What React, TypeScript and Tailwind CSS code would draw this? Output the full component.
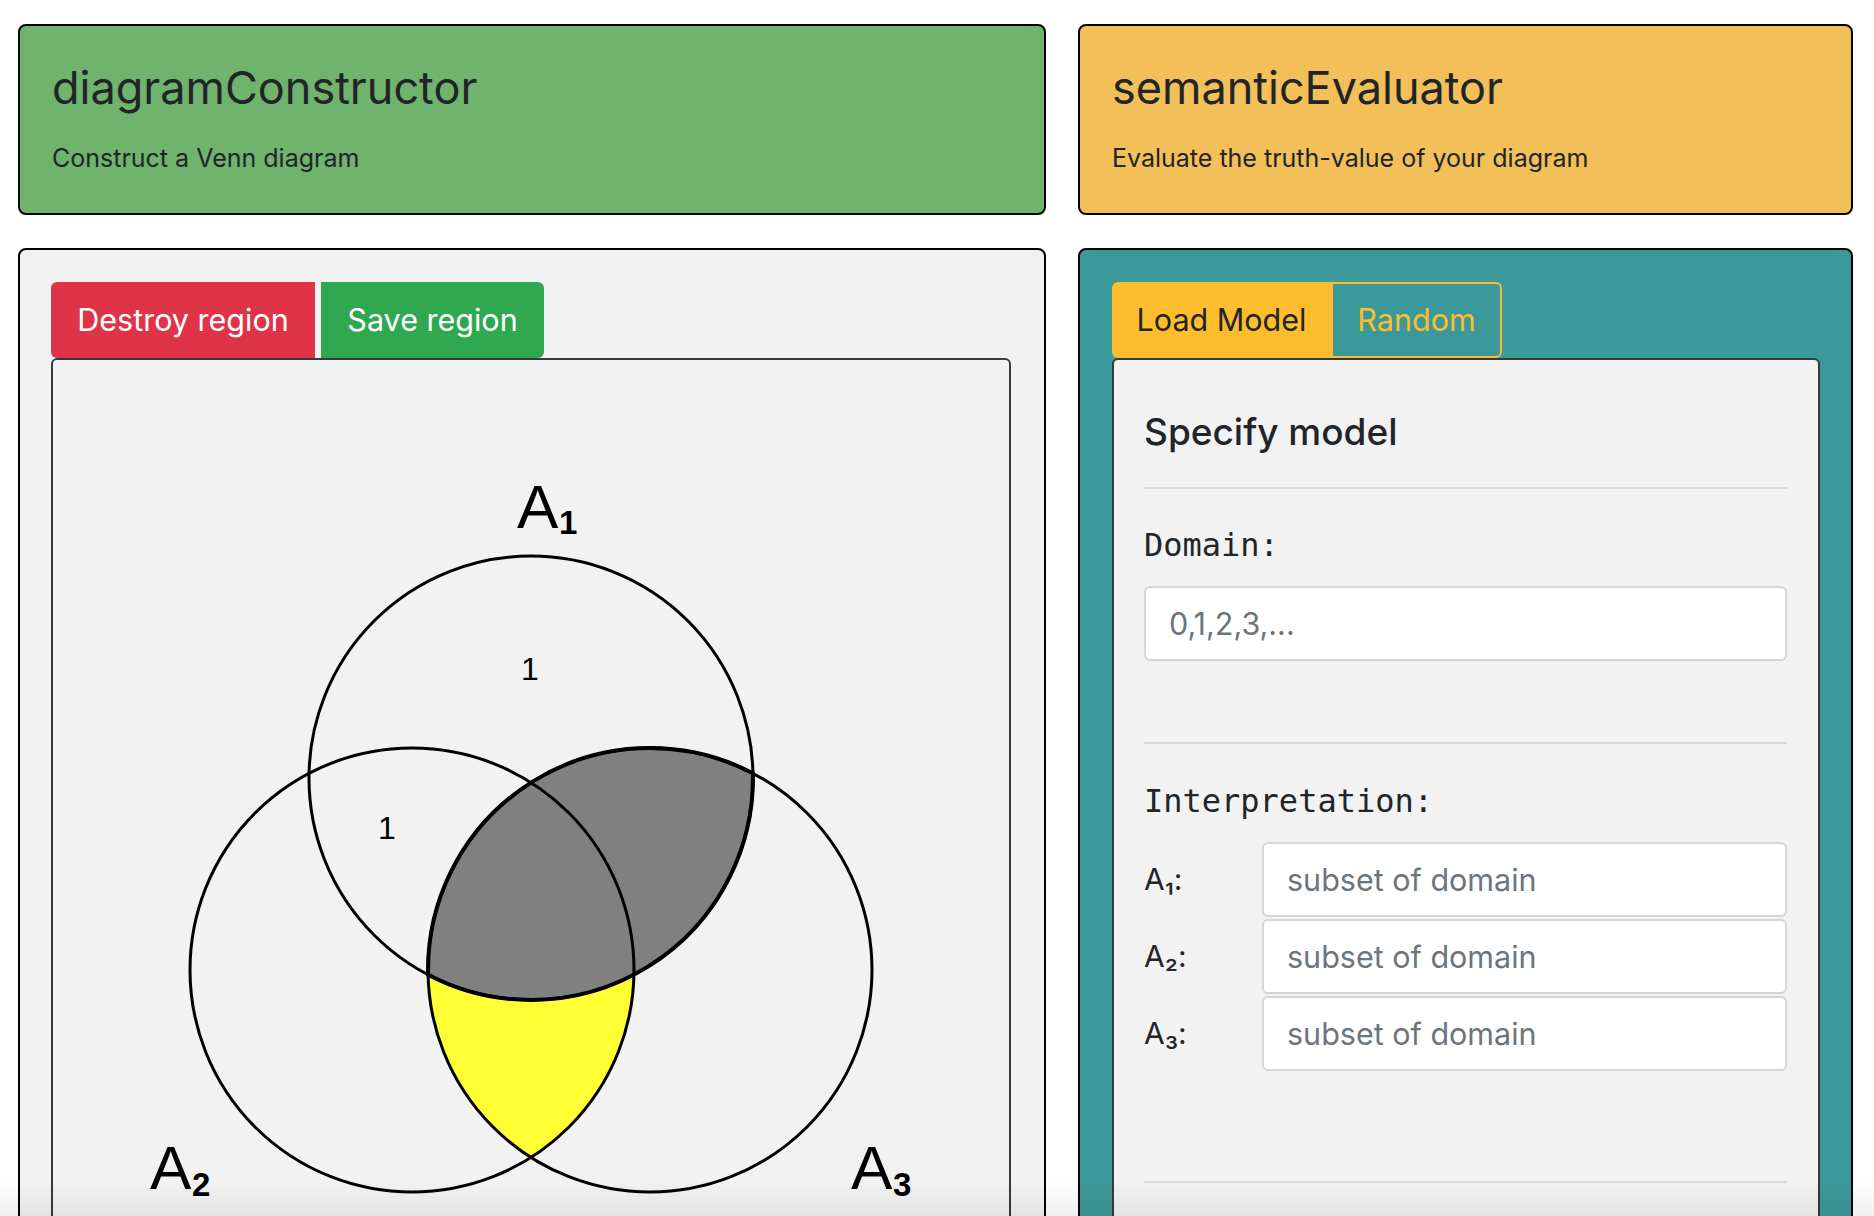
import React from 'react';

const A1 = { cx: 478, cy: 418 };
const A2 = { cx: 359, cy: 610 };
const A3 = { cx: 597, cy: 610 };
const R = 222;

function VennDiagram() {
  // lens A1 ∩ A3, used for the thick outline of the shaded region
  const lens = 'M 375.1 614.7 A 222 222 0 0 0 699.9 413.3 A 222 222 0 0 0 375.1 614.7 Z';

  return (
    <svg width={956} height={860} viewBox="0 0 956 860" className="block">
      <defs>
        <clipPath id="clipA3">
          <circle cx={A3.cx} cy={A3.cy} r={R} />
        </clipPath>
      </defs>

      {/* A2 ∩ A3 (yellow), then A1 ∩ A3 on top (grey) */}
      <circle cx={A2.cx} cy={A2.cy} r={R} fill="#ffff33" clipPath="url(#clipA3)" />
      <circle cx={A1.cx} cy={A1.cy} r={R} fill="#808080" clipPath="url(#clipA3)" />
      <path d={lens} fill="none" stroke="#000" strokeWidth={4} />

      <circle cx={A1.cx} cy={A1.cy} r={R} fill="none" stroke="#000" strokeWidth={3} />
      <circle cx={A2.cx} cy={A2.cy} r={R} fill="none" stroke="#000" strokeWidth={3} />
      <circle cx={A3.cx} cy={A3.cy} r={R} fill="none" stroke="#000" strokeWidth={3} />

      <g fontFamily="'Liberation Sans', Arial, sans-serif" fill="#000">
        <text x={464} y={168} fontSize={62}>A</text>
        <text x={506} y={174} fontSize={33} fontWeight={700}>1</text>

        <text x={97} y={829} fontSize={62}>A</text>
        <text x={139} y={836} fontSize={33} fontWeight={700}>2</text>

        <text x={798} y={829} fontSize={62}>A</text>
        <text x={840} y={836} fontSize={33} fontWeight={700}>3</text>

        <text x={477} y={320} fontSize={32} textAnchor="middle">1</text>
        <text x={334} y={479} fontSize={32} textAnchor="middle">1</text>
      </g>
    </svg>
  );
}

function HeaderCard({ title, subtitle, bg }: { title: string; subtitle: string; bg: string }) {
  return (
    <div className={`h-[191px] rounded-[8px] border-2 border-black px-[32px] pt-[38px] ${bg}`}>
      <h1 className="text-[45px] font-normal leading-[48px] text-[#212529]">{title}</h1>
      <p className="mt-[28px] text-[25px] leading-[37.5px] text-[#212529]">{subtitle}</p>
    </div>
  );
}

function SubsetRow({ label }: { label: string }) {
  return (
    <div className="flex items-center">
      <div className="w-[118px] shrink-0 text-[30px] text-[#212529]">{label}</div>
      <input
        type="text"
        placeholder="subset of domain"
        className="h-[75px] min-w-0 flex-1 rounded-[6px] border-2 border-[#d3d7dc] bg-white px-[23px] text-[30.5px] text-[#212529] placeholder-[#6c757d] outline-none"
      />
    </div>
  );
}

export default function App() {
  return (
    <div className="relative h-screen overflow-hidden bg-white font-['Inter',sans-serif]">
      <div className="grid grid-cols-[1028px_775px] gap-x-[32px] gap-y-[33px] pl-[18px] pt-[24px]">
        <HeaderCard title="diagramConstructor" subtitle="Construct a Venn diagram" bg="bg-[#6fb36c]" />
        <HeaderCard title="semanticEvaluator" subtitle="Evaluate the truth-value of your diagram" bg="bg-[#f3bf58]" />

        {/* diagram constructor panel */}
        <div className="h-[1000px] rounded-[8px] border-2 border-black bg-[#f2f2f2] pl-[31px] pr-[33px] pt-[32px]">
          <div className="flex gap-[6px]">
            <button className="h-[76px] w-[264px] rounded-l-[6px] bg-[#df3448] text-[30.5px] text-white">
              Destroy region
            </button>
            <button className="h-[76px] w-[223px] rounded-r-[6px] bg-[#2fa84f] text-[30.5px] text-white">
              Save region
            </button>
          </div>
          <div className="h-[900px] rounded-t-[6px] border-2 border-[#343a40] bg-[#f2f2f2]">
            <VennDiagram />
          </div>
        </div>

        {/* semantic evaluator panel */}
        <div className="h-[1000px] rounded-[8px] border-2 border-black bg-[#3c9999] pl-[32px] pr-[31px] pt-[32px]">
          <div className="flex">
            <button className="h-[76px] w-[219px] rounded-l-[6px] bg-[#fdbd2c] text-[30.5px] text-[#212529]">
              Load Model
            </button>
            <button className="h-[76px] w-[171px] rounded-r-[6px] border-2 border-[#fdbd2c] text-[30.5px] text-[#fdbd2c]">
              Random
            </button>
          </div>
          <div className="h-[900px] rounded-t-[6px] border-2 border-[#343a40] bg-[#f2f2f2] pl-[30px] pr-[31px] pt-[50px]">
            <h2 className="text-[37px] font-medium leading-[44px] text-[#212529]">Specify model</h2>
            <hr className="mt-[33px] border-t-2 border-[#dadada]" />

            <div className="mt-[34px] font-['DejaVu_Sans_Mono',monospace] text-[32px] leading-[45px] text-[#212529]">
              Domain:
            </div>
            <input
              type="text"
              placeholder="0,1,2,3,..."
              className="mt-[18px] h-[75px] w-full rounded-[6px] border-2 border-[#d3d7dc] bg-white px-[23px] text-[30.5px] text-[#212529] placeholder-[#6c757d] outline-none"
            />
            <hr className="mt-[81px] border-t-2 border-[#dadada]" />

            <div className="mt-[35px] font-['DejaVu_Sans_Mono',monospace] text-[32px] leading-[45px] text-[#212529]">
              Interpretation:
            </div>
            <div className="mt-[18px] flex flex-col gap-[2px]">
              <SubsetRow label="A₁:" />
              <SubsetRow label="A₂:" />
              <SubsetRow label="A₃:" />
            </div>
            <hr className="mt-[110px] border-t-2 border-[#dadada]" />
          </div>
        </div>
      </div>

      {/* soft shade at the bottom edge of the screenshot */}
      <div className="pointer-events-none absolute bottom-0 left-0 right-0 h-[36px] bg-linear-to-b from-transparent to-black/[0.06]" />
    </div>
  );
}
